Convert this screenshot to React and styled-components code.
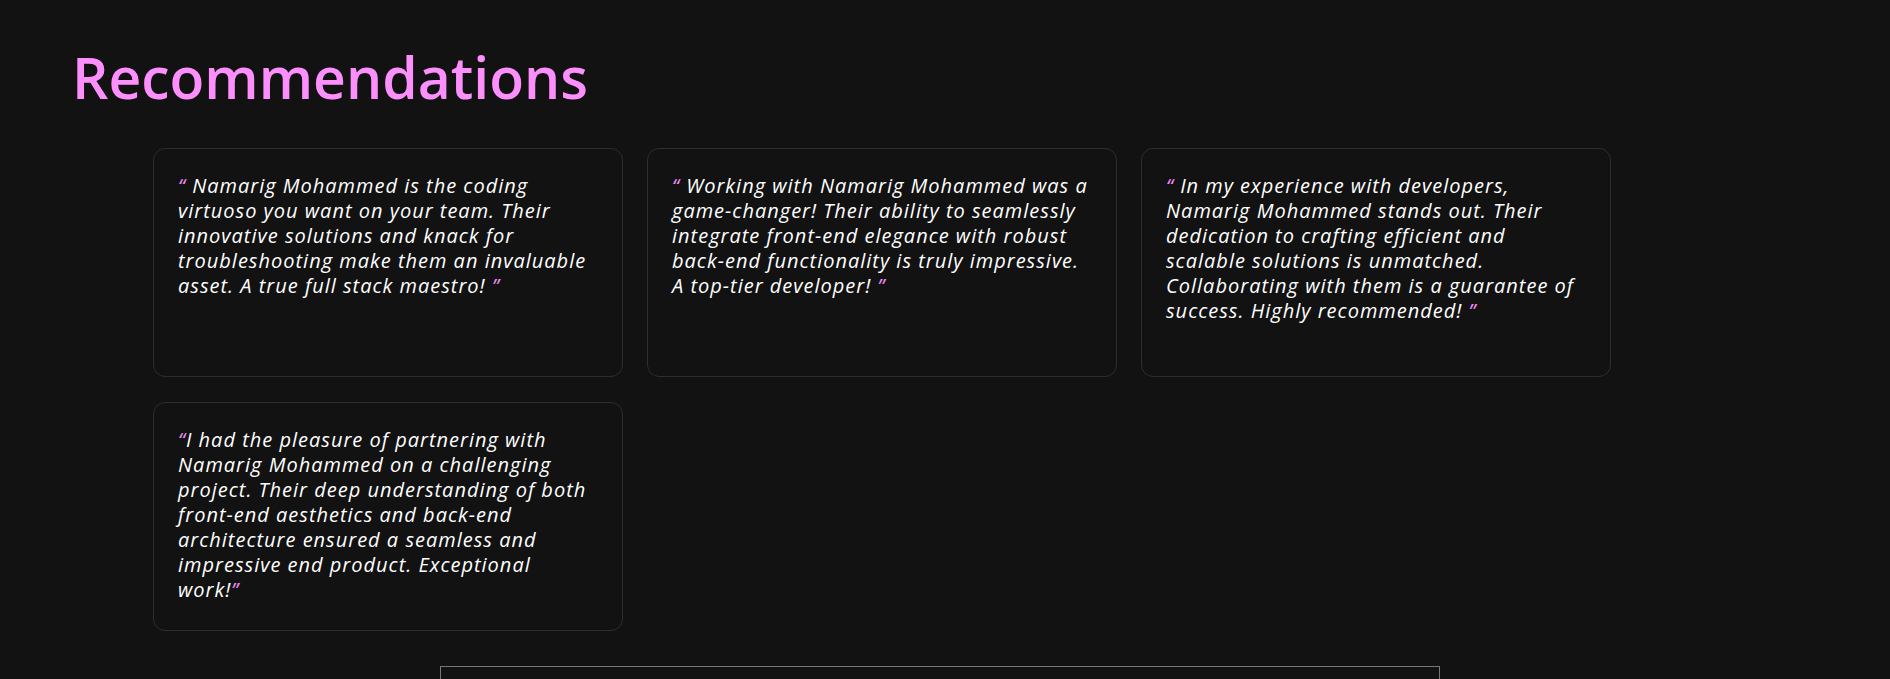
import React from 'react';
import styled, { createGlobalStyle } from 'styled-components';

const GlobalStyle = createGlobalStyle`
	body {
		margin: 0;
		background: #121212;
		font-family: "Open Sans", "DejaVu Sans", sans-serif;
	}
`;

const recommendations = [
	{ text: 'Namarig Mohammed is the coding virtuoso you want on your team. Their innovative solutions and knack for troubleshooting make them an invaluable asset. A true full stack maestro!', spaced: true },
	{ text: 'Working with Namarig Mohammed was a game-changer! Their ability to seamlessly integrate front-end elegance with robust back-end functionality is truly impressive. A top-tier developer!', spaced: true },
	{ text: 'In my experience with developers, Namarig Mohammed stands out. Their dedication to crafting efficient and scalable solutions is unmatched. Collaborating with them is a guarantee of success. Highly recommended!', spaced: true },
	{ text: 'I had the pleasure of partnering with Namarig Mohammed on a challenging project. Their deep understanding of both front-end aesthetics and back-end architecture ensured a seamless and impressive end product. Exceptional work!', spaced: false },
];

const Section = styled.section`
	padding: 43px 0 0 72px;
`;

const Title = styled.h1`
	margin: 0 0 37px 0;
	font-family: "Open Sans", sans-serif;
	font-weight: 600;
	font-size: 57px;
	line-height: 68px;
	color: #fc8ffc;
`;

const Grid = styled.div`
	display: grid;
	grid-template-columns: repeat(3, 470px);
	grid-auto-rows: 229px;
	column-gap: 24px;
	row-gap: 25px;
	margin-left: 81px;
`;

const Card = styled.div`
	box-sizing: border-box;
	border: 1px solid #2e2e2e;
	border-radius: 12px;
	padding: 24px;
	background: #121212;
`;

const Quote = styled.p`
	margin: 0;
	font-family: "Open Sans", sans-serif;
	font-style: italic;
	font-size: 20px;
	letter-spacing: 1px;
	line-height: 25px;
	color: #ffffff;
`;

const Mark = styled.span`
	color: #f18af5;
`;

const Frame = styled.div`
	width: 998px;
	height: 200px;
	margin: 35px 0 0 368px;
	border: 1px solid #777;
`;

const App = () => {
	return (
		<>
			<GlobalStyle />
			<Section>
				<Title>Recommendations</Title>
				<Grid>
					{recommendations.map((r, i) => (
						<Card key={i}>
							<Quote>
								<Mark>{r.spaced ? '“ ' : '“'}</Mark>
								{r.text}
								<Mark>{r.spaced ? ' ”' : '”'}</Mark>
							</Quote>
						</Card>
					))}
				</Grid>
				<Frame />
			</Section>
		</>
	);
};

export default App;
